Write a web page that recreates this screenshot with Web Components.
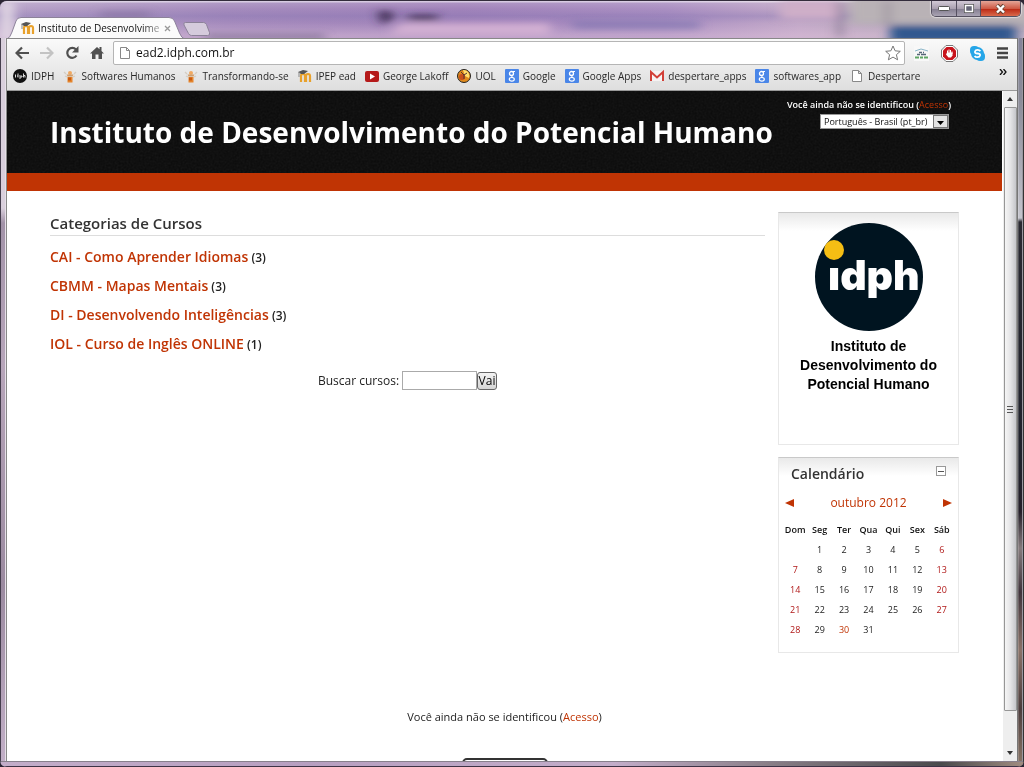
<!DOCTYPE html>
<html lang="pt-BR">
<head>
<meta charset="utf-8">
<title>Instituto de Desenvolvimento do Potencial Humano</title>
<style>
html,body{margin:0;height:100%}
body{font-family:"Open Sans","Noto Sans",sans-serif;color:#222;overflow:hidden;background:#2b2533}
</style>
</head>
<body>
<browser-window>
  <tab-strip slot="tabs"></tab-strip>
  <nav-bar slot="bar"></nav-bar>
  <bookmark-bar slot="bar">
    <book-mark icon="idph">IDPH</book-mark>
    <book-mark icon="sh">Softwares Humanos</book-mark>
    <book-mark icon="sh">Transformando-se</book-mark>
    <book-mark icon="moodle">IPEP ead</book-mark>
    <book-mark icon="tube">George Lakoff</book-mark>
    <book-mark icon="uol">UOL</book-mark>
    <book-mark icon="google">Google</book-mark>
    <book-mark icon="google">Google Apps</book-mark>
    <book-mark icon="gmail">despertare_apps</book-mark>
    <book-mark icon="google">softwares_app</book-mark>
    <book-mark icon="page">Despertare</book-mark>
  </bookmark-bar>
  <site-page>
    <site-header slot="header"></site-header>
    <course-list slot="main"></course-list>
    <side-block slot="side"><idph-card></idph-card></side-block>
    <side-block slot="side"><month-calendar></month-calendar></side-block>
    <site-footer slot="footer"></site-footer>
  </site-page>
</browser-window>

<script>
const icons={
idph:'<circle cx="7" cy="7" r="7" fill="#111"/><path d="M2.500 5.500v3M5 4.500v4M4 7h1M7 6v4M8 7h1v1H7M10.500 4.500v4M10.500 6.500h1.500v2" stroke="#ddd" fill="none"/>',
sh:'<path d="M1 3l2 2M13 3l-2 2M2 7l2 1M12 7l-2 1" stroke="#d4cdc3" stroke-width="1.300" fill="none"/><circle cx="7" cy="4" r="2" fill="#f0a860"/><path d="M3.500 5.500h7l-1 2h-5z" fill="#cfa070"/><path d="M4.500 8h5v5.500h-5z" fill="#e5852c"/><path d="M5 8.500h3v3H5z" fill="#c85a10"/>',
moodle:'<path d="M3 13V7q0-2 2-2t2 2v6M8 13V7q0-2 2-2t2 2v6" stroke="#e8a12c" stroke-width="2.200" fill="none"/><path d="M0 3l5-2 5 1-4 3-3 0z" fill="#555"/><path d="M1 3v5" stroke="#888"/>',
tube:'<rect y="2" width="14" height="11" rx="2" fill="#b51a1a"/><path d="M5 4.500v6l5-3z" fill="#fff"/>',
uol:'<circle cx="7" cy="7" r="6.500" fill="#e08a1c" stroke="#222"/><path d="M6 1a6 6 0 0 1 6 8L8 7z" fill="#ffe070"/><circle cx="5" cy="8" r="3" fill="#c8501c"/><path d="M4 3l3 3 3-2M7 6v4" stroke="#533" fill="none"/>',
google:'<rect width="14" height="14" rx="1" fill="#4a86e8"/><circle cx="6.500" cy="4.500" r="2" fill="none" stroke="#fff" stroke-width="1.300"/><path d="M8 2.500h2M7 7q-1 1 1 1.500" stroke="#fff" fill="none"/><ellipse cx="6.800" cy="10.300" rx="2.500" ry="1.800" fill="none" stroke="#fff" stroke-width="1.200"/>',
gmail:'<rect y="2" width="14" height="10" fill="#f6f2f2"/><path d="M1 12V3l6 5.500L13 3v9" fill="none" stroke="#d23f37" stroke-width="2"/>',
page:'<path d="M2.500 1.500h6l3 3v8h-9zM8.500 1.500v3h3" fill="#fff" stroke="#888"/>'
};
const svg=(w,h,s,box)=>`<svg width="${w}" height="${h}" viewBox="${box||`0 0 ${w} ${h}`}" aria-hidden="true">${s}</svg>`;
const define=(name,html)=>customElements.define(name,class extends HTMLElement{
  constructor(){super();this.attachShadow({mode:'open'}).innerHTML='<style>*{box-sizing:border-box}svg{display:block;flex:none}a{color:#c03404;text-decoration:none}button{font:inherit;margin:0;cursor:pointer}</style>'+(typeof html==='function'?html(this):html)}
});

define('browser-window',`<style>
:host{display:flex;flex-direction:column;height:100vh;box-sizing:border-box;padding:0 7px 6px;border-top:1px solid #332c3c;border-radius:7px;overflow:hidden;position:relative;
background:linear-gradient(90deg,#b7a2c8,#a58bbd 22%,#a183ba 45%,#aa8fc2 65%,#c2a8c8 78%,#b5a9ba 90%,#aaa4b0)}
.haze{position:absolute;inset:0 0 auto;height:37px;overflow:hidden;background:linear-gradient(#ffffff90 0 1px,#ffffff20 2px,transparent 8px,#8070b050 15px,transparent 22px,#e0c2da70 34px)}
.haze svg{width:100%;height:37px}
.side{position:absolute;top:37px;bottom:0;width:7px}
.left{left:0;background:linear-gradient(90deg,#453e4d 0 1px,transparent 1px 5px,#e6dfe8 5px 6px,#888 6px),linear-gradient(#d9cfdc 0 170px,#a292a8 185px,#b7a5ba 45%,#9b8aa0 75%,#c3b0c8)}
.right{right:0;background:linear-gradient(90deg,#777 0 1px,#ffffff30 1px 2px,transparent 2px 5px,#9a98a0 5px 6px,#333 6px),linear-gradient(#85849a,#8a8b98 60px,#c4c4cc 180px,#2a2a32 184px,#20222c 58%,#25202a 65%,#857a7c 70%,#40343c 76%,#8a7268 84%,#4c3c3c 92%,#8c7868)}
.tabs{position:relative;height:37px;flex:none;display:flex}
.bar{position:relative;background:linear-gradient(#fafafa,#dedede);height:53px;flex:none;border-top:1px solid #888;border-bottom:1px solid #999;display:flex;flex-direction:column}
.view{position:relative;display:flex;flex:1;min-height:0;overflow:hidden;background:#fff}
.page{flex:1;min-width:0}
.scroll{width:15px;background:#eee;display:flex;flex-direction:column;align-items:center;border-left:1px solid #fff}
.up,.down{height:16px;display:grid;place-items:center}
.thumb{flex:1;width:13px;border:1px solid #969696;border-radius:1px;background:linear-gradient(90deg,#f5f5f5,#e4e4e6 50%,#c5c6ca);display:grid;place-items:center}
.track{height:34px}
.win{position:absolute;right:3px;top:0;display:flex;border:1px solid #555060;border-top:0;border-radius:0 0 5px 5px;overflow:hidden;box-shadow:0 0 1px 1px #ffffff80}
.win button{border:0;padding:0;height:15px;width:24px;display:grid;place-items:center;background:linear-gradient(#d2c9d6,#aaa0b0 50%,#837c8f 51%,#a9a3b3)}
.win button+button{border-left:1px solid #554f60}
.win .x{width:40px;background:linear-gradient(#e5a597,#cf5a45 50%,#ba2612 51%,#d96a4c)}
.rim{position:absolute;inset:auto 1px 0;height:6px;background:linear-gradient(#88808c 0 1px,transparent 1px 5px,#3d3346 5px),linear-gradient(90deg,#c3adc9,#b79fc0 30%,#c3adc9 60%,#8a7f88 75%,#4a4a4c 92%,#a08c80)}
</style>
<div class="haze"><svg viewBox="0 0 1024 37" preserveAspectRatio="none"><defs><filter id="b" x="-10%" y="-60%" width="120%" height="220%"><feGaussianBlur stdDeviation="6 3"/></filter></defs><g filter="url(#b)"><path d="M0 0h14v40H0z" fill="#e1d7e4"/><path d="M100 10h50v8h-50z" fill="#84709c" opacity=".6"/><path d="M400 22h150v12H390z" fill="#d9b5d6" opacity=".8"/><path d="M205 33h120v5H205z" fill="#6f6288" opacity=".7"/><path d="M570 20h130v8H575z" fill="#7870ae" opacity=".6"/><path d="M378 10h12l4 6-12 8zM408 14h30v5h-30z" fill="#3c2c50"/><path d="M850 -5h190v28H850z" fill="#b9b2b6"/><path d="M780 0h60v18h-60z" fill="#ceaec8"/><path d="M838 0h4v36h-4zM886 0h3v24h-3z" fill="#776a86"/><path d="M890 24h126v18H890z" fill="#33588f"/></g></svg></div>
<div class="side left"></div><div class="side right"></div><div class="rim"></div>
<div class="tabs"><slot name="tabs"></slot></div>
<div class="bar"><slot name="bar"></slot></div>
<div class="view"><div class="page"><slot></slot></div>
<div class="scroll"><div class="up">${svg(6,4,'<path d="M0 4L3 0l3 4z" fill="#333"/>')}</div><div class="thumb">${svg(6,7,'<path d="M0 .5h6M0 3.500h6M0 6.500h6" stroke="#555"/>')}</div><div class="track"></div><div class="down">${svg(6,4,'<path d="M0 0l3 4 3-4z" fill="#333"/>')}</div></div></div>
<div class="win"><button aria-label="Minimizar">${svg(12,5,'<rect x=".5" y=".5" width="11" height="4" rx="1" fill="#fff" stroke="#555"/>')}</button><button aria-label="Restaurar">${svg(10,9,'<path d="M1.500 1.500h7v6h-7z" fill="none" stroke="#555" stroke-width="3"/><path d="M1.500 1.500h7v6h-7z" fill="#667" stroke="#fff" stroke-width="1.500"/>')}</button><button class="x" aria-label="Fechar">${svg(11,10,'<path d="M2 1l7 8M9 1l-7 8" stroke="#643" stroke-width="4"/><path d="M2 1.500l7 7M9 1.500l-7 7" stroke="#fff" stroke-width="2.400"/>')}</button></div>`);

define('tab-strip',`<style>
:host{display:flex;align-items:flex-end;height:37px}
.tab{display:grid;width:176px;height:21px}
.tab>*{grid-area:1/1}
.row{display:flex;align-items:center;padding:0 9px 0 14px;gap:3px}
.t{font-size:10px;line-height:14px;width:122px;white-space:nowrap;color:#111;-webkit-mask:linear-gradient(90deg,#000 85%,#0005)}
.new{padding:0;border:0;background:none;align-self:flex-start;margin-top:21px}
button.c{border:0;padding:0 0 0 1px;background:none}
</style>
<div class="tab"><svg width="180" height="22" viewBox="0 0 180 22"><path d="M0 22q3-1 5-7l4-11q1-3.500 5-3.500h148q4 0 5.500 3.500l5 12q2 5 5 6z" fill="#fbfbfb" stroke="#8c8299"/></svg>
<div class="row">${svg(14,14,icons.moodle)}<span class="t">Instituto de Desenvolvime</span><button class="c" aria-label="Fechar guia">${svg(7,7,'<path d="M1 1l5 5M6 1L1 6" stroke="#999" stroke-width="1.300"/>')}</button></div></div>
<button class="new" aria-label="Nova guia">${svg(28,14,'<path d="M2.500.5h18q2 0 3 2l3 8q1 3-2 3h-16q-2 0-3-2L1 3Q0 .5 2.500.5z" fill="#d5cbdc" stroke="#8c8299"/>')}</button>`);

define('nav-bar',`<style>
:host{display:flex;align-items:center;height:28px;padding:0 9px 0 8px}
button{border:0;background:none;padding:0}
.l{display:flex;gap:11px;margin-right:9px}
.box{flex:1;height:24px;background:#fff;border:1px solid #b5b5b5;border-radius:2px;display:flex;align-items:center;padding:0 3px 0 4px;gap:2px}
input{flex:1;min-width:0;border:0;outline:0;padding:0 2px;font:12px/18px "Open Sans","Noto Sans",sans-serif;color:#111;background:none}
.r{display:flex;align-items:center;gap:12px;margin-left:9px}
</style>
<div class="l"><button aria-label="Voltar">${svg(14,14,'<path d="M14 7H2M7 1.500L1.500 7 7 12.500" fill="none" stroke="#505050" stroke-width="2.200"/>')}</button><button aria-label="Avançar">${svg(14,14,'<path d="M0 7h12M7 1.500L12.500 7 7 12.500" fill="none" stroke="#c3c3c3" stroke-width="2.200"/>')}</button><button aria-label="Recarregar">${svg(14,14,'<path d="M11.500 9.500A5 5 0 1 1 11 3.500" fill="none" stroke="#505050" stroke-width="2.200"/><path d="M13.500 0v6.500H7z" fill="#505050"/>')}</button><button aria-label="Página inicial">${svg(14,14,'<path d="M0 7.500L7 1l2.500 2.200V1h2v4L14 7.500h-2V13H8.500V8.500h-3V13H2V7.500z" fill="#505050"/>')}</button></div>
<div class="box">${svg(14,14,icons.page)}<input aria-label="Endereço" value="ead2.idph.com.br">${svg(16,16,'<path d="M8 1l2.100 4.800 5.200.5-3.900 3.400 1.200 5.100L8 12.100l-4.600 2.700 1.200-5.100L.7 6.300l5.200-.5z" fill="#fff" stroke="#777"/>')}</div>
<div class="r">${svg(15,15,'<path d="M0 0h15v15H0z" fill="#f8f8f8"/><path d="M1 5l6-2 7 2" stroke="#8ab5c8" fill="none"/><path d="M3 8.500h3M7 8.500h5M5 6.500h3M9 6.500h1" stroke="#567" stroke-width="1.500"/><path d="M1 11.500h4M6 11.500h3M10 11.500h4" stroke="#5fa664" stroke-width="2"/>')}${svg(17,17,'<path d="M5 .5h7L16.500 5v7L12 16.500H5L.5 12V5z" fill="#fff" stroke="#777"/><path d="M5.500 2h6L15 5.500v6L11.500 15h-6L2 11.500v-6z" fill="#c8141c"/><path d="M6.500 8V5.500M8 8V4.500M9.500 8V5M11 9V6.500" stroke="#fff"/><path d="M6 7.500h5.500v3L10 12.500H7.500L5 9.500z" fill="#fff"/>')}${svg(15,15,'<rect width="9" height="9" rx="4" fill="#26a6e8"/><rect x="6" y="6" width="9" height="9" rx="4" fill="#26a6e8"/><circle cx="7.500" cy="7.500" r="6.500" fill="#26a6e8"/><path d="M10.300 5.200Q9.500 3.800 7.500 3.800T5 5.600 7.500 7.500t2.600 1.900T7.500 11.200 4.700 9.800" fill="none" stroke="#fff" stroke-width="1.800"/>')}<button aria-label="Menu">${svg(11,12,'<path d="M0 1.500h11M0 6h11M0 10.500h11" stroke="#444" stroke-width="2.400"/>')}</button></div>`);

define('bookmark-bar',`<style>:host{display:flex;align-items:center;height:18px;padding:0 10px 0 6px;gap:9px}button{margin-left:auto;margin-top:2px;border:0;padding:0;background:none;align-self:flex-start}</style><slot></slot><button aria-label="Mais favoritos">${svg(8,6,'<path d="M1 0l2.500 3L1 6M4.500 0L7 3 4.500 6" fill="none" stroke="#111" stroke-width="1.300"/>')}</button>`);
define('book-mark',e=>`<style>:host{display:block;flex:none}a{display:flex;align-items:center;gap:4px;color:#282828;font-size:10px;line-height:14px;white-space:nowrap}</style><a href="#">${svg(14,14,icons[e.getAttribute('icon')])}<slot></slot></a>`);

define('site-page',`<style>
:host{display:block;font-size:12px}
.cols{display:grid;grid-template-columns:minmax(0,1fr) 181px;gap:13px;padding:21px 43px 0 43px}
.side{display:flex;flex-direction:column;gap:12px}
</style><slot name="header"></slot><div class="cols"><main><slot name="main"></slot></main><aside class="side"><slot name="side"></slot></aside></div><slot name="footer"></slot>`);

define('site-header',`<style>
:host{display:flex;justify-content:space-between;box-sizing:border-box;height:100px;padding:0 51px 0 43px;border-bottom:18px solid #c03404;color:#fff;background:#0a0a0a;position:relative}
.grain{position:absolute;inset:0;width:100%;height:100%;opacity:.07}
h1,.r{position:relative}
h1{margin:23px 0 0;font:700 28px/36px "Open Sans","Noto Sans",sans-serif;white-space:nowrap}
.r{display:flex;flex-direction:column;align-items:flex-end;padding-top:8px;gap:3px;font-size:9px;line-height:12px;white-space:nowrap;font-weight:600}
a{font-weight:400}
.s{display:grid;margin-right:2px;background:#fff;width:129px;height:15px;border:1px solid #999}
.s>*{grid-area:1/1}
select{appearance:none;border:0;outline:0;background:none;padding:0 0 0 3px;margin:0;font:9px/13px "Open Sans","Noto Sans",sans-serif;color:#111;width:100%}
.s svg{justify-self:end;pointer-events:none}
</style><svg class="grain" aria-hidden="true"><filter id="n"><feTurbulence type="fractalNoise" baseFrequency=".5" numOctaves="2"/><feColorMatrix type="saturate" values="0"/></filter><rect width="100%" height="100%" filter="url(#n)"/></svg><h1>Instituto de Desenvolvimento do Potencial Humano</h1>
<div class="r"><div>Você ainda não se identificou (<a href="#">Acesso</a>)</div><div class="s"><select aria-label="Idioma"><option>Português - Brasil (pt_br)</option></select>${svg(15,13,'<rect x=".5" y=".5" width="14" height="12" fill="#e4e4e4" stroke="#777"/><path d="M4 6h7l-3.500 4z" fill="#000"/>')}</div></div>`);

define('course-list',`<style>
h2{margin:0 0 11px;font:600 15px/23px "Open Sans","Noto Sans",sans-serif;color:#333;border-bottom:1px solid #ddd}
ul{list-style:none;margin:0;padding:0}
li{line-height:20px;font-size:12px;font-weight:600;margin-bottom:8px;color:#222;white-space:nowrap}
li a{font-size:14px}
form{display:flex;justify-content:center;align-items:center;margin-top:16px;gap:3px;font-size:12px;line-height:18px;color:#222}
input{width:75px;height:19px;border:1px solid #aaa;padding:0}
button{border:1px solid #666;border-radius:3px;background:linear-gradient(#f3f3f3,#d5d5d5);padding:0;width:20px;height:18px;line-height:16px;margin-left:-3px}
</style><h2>Categorias de Cursos</h2>
<ul><li><a href="#">CAI - Como Aprender Idiomas</a> (3)</li><li><a href="#">CBMM - Mapas Mentais</a> (3)</li><li><a href="#">DI - Desenvolvendo Inteligências</a> (3)</li><li><a href="#">IOL - Curso de Inglês ONLINE</a> (1)</li></ul>
<form onsubmit="return false"><label for="q">Buscar cursos:</label><input id="q" type="text"><button>Vai</button></form>`);

define('side-block',`<style>:host{display:block;border:1px solid #e8e8e8;border-top-color:#c9c9c9;background:linear-gradient(#e9e9e9,#fff 18px)}</style><slot></slot>`);

define('idph-card',`<style>:host{display:flex;flex-direction:column;align-items:center;padding:10px 0 50px;font:700 14px/19px "Liberation Sans",sans-serif;color:#000;text-align:center}p{margin:4px 0 0;width:150px}text{font:900 41px Inter,sans-serif}</style>
<svg width="110" height="110" viewBox="0 0 110 110" role="img" aria-label="idph"><circle cx="55" cy="54" r="54" fill="#001420"/><text x="14" y="67" fill="#fff">idph</text><path d="M12 30h13v14H12z" fill="#001420"/><circle cx="20" cy="27" r="10" fill="#f5be14"/></svg>
<p>Instituto de Desenvolvimento do Potencial Humano</p>`);

const weeks=[['',1,2,3,4,5,6],[7,8,9,10,11,12,13],[14,15,16,17,18,19,20],[21,22,23,24,25,26,27],[28,29,30,31,'','','']];
define('month-calendar',`<style>
:host{display:block;padding:0 4px 12px 4px}
header{display:flex;justify-content:space-between;padding:6px 8px 0 8px}
h2{margin:0;font:600 14px/20px "Open Sans","Noto Sans",sans-serif;color:#333}
header button{border:1px solid #999;width:10px;height:10px;padding:0;background:#fff;display:grid;place-items:center;margin-top:2px}
nav{display:flex;justify-content:space-between;align-items:center;margin:9px 2px 7px 2px;line-height:20px;font-size:12px}
table{width:100%;border-collapse:collapse;table-layout:fixed;font-size:9px;line-height:20px;text-align:center;color:#222}
th{font-weight:600;padding:0;color:#111}td{padding:0}
td:first-child,td:last-child{color:#b01818}
</style><header><h2>Calendário</h2><button aria-label="Ocultar">${svg(6,1,'<path d="M0 .5h6" stroke="#555"/>')}</button></header>
<nav><a href="#" aria-label="Mês anterior">${svg(9,8,'<path d="M9 0v8L0 4z" fill="#c03404"/>')}</a><a href="#">outubro 2012</a><a href="#" aria-label="Próximo mês">${svg(9,8,'<path d="M0 0v8l9-4z" fill="#c03404"/>')}</a></nav>
<table><thead><tr>${['Dom','Seg','Ter','Qua','Qui','Sex','Sáb'].map(d=>`<th scope="col">${d}</th>`).join('')}</tr></thead><tbody>${weeks.map(w=>`<tr>${w.map(d=>`<td>${d===30?'<a href="#">30</a>':d}</td>`).join('')}</tr>`).join('')}</tbody></table>`);

define('site-footer',`<style>:host{display:flex;flex-direction:column;align-items:center;padding-top:54px;font-size:11px;line-height:20px;color:#222}.b{width:86px;height:24px;border:2px solid #333;border-radius:5px;margin-top:31px}</style><div>Você ainda não se identificou (<a href="#">Acesso</a>)</div><div class="b"></div>`);
</script>
</body>
</html>
